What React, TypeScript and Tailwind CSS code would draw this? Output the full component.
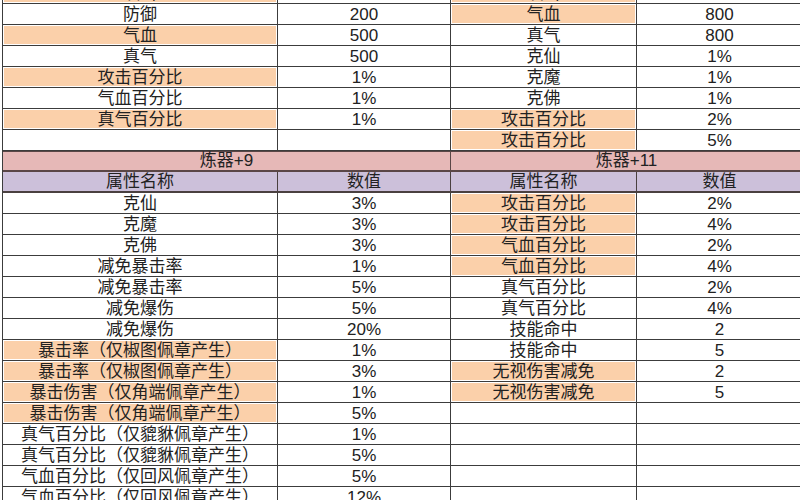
import React from 'react';

type Cell = { n: string; v: string; hl?: boolean };
type Sec = Cell | { head: string } | 'cols' | null;

const left: Sec[] = [
  { n: '攻击', v: '120', hl: true },
  { n: '防御', v: '200' },
  { n: '气血', v: '500', hl: true },
  { n: '真气', v: '500' },
  { n: '攻击百分比', v: '1%', hl: true },
  { n: '气血百分比', v: '1%' },
  { n: '真气百分比', v: '1%', hl: true },
  { n: '', v: '' },
  { head: '炼器+9' },
  'cols',
  { n: '克仙', v: '3%' },
  { n: '克魔', v: '3%' },
  { n: '克佛', v: '3%' },
  { n: '减免暴击率', v: '1%' },
  { n: '减免暴击率', v: '5%' },
  { n: '减免爆伤', v: '5%' },
  { n: '减免爆伤', v: '20%' },
  { n: '暴击率（仅椒图佩章产生）', v: '1%', hl: true },
  { n: '暴击率（仅椒图佩章产生）', v: '3%', hl: true },
  { n: '暴击伤害（仅角端佩章产生）', v: '1%', hl: true },
  { n: '暴击伤害（仅角端佩章产生）', v: '5%', hl: true },
  { n: '真气百分比（仅貔貅佩章产生）', v: '1%' },
  { n: '真气百分比（仅貔貅佩章产生）', v: '5%' },
  { n: '气血百分比（仅回风佩章产生）', v: '5%' },
  { n: '气血百分比（仅回风佩章产生）', v: '12%' },
];

const right: Sec[] = [
  { n: '攻击', v: '240', hl: true },
  { n: '气血', v: '800', hl: true },
  { n: '真气', v: '800' },
  { n: '克仙', v: '1%' },
  { n: '克魔', v: '1%' },
  { n: '克佛', v: '1%' },
  { n: '攻击百分比', v: '2%', hl: true },
  { n: '攻击百分比', v: '5%', hl: true },
  { head: '炼器+11' },
  'cols',
  { n: '攻击百分比', v: '2%', hl: true },
  { n: '攻击百分比', v: '4%', hl: true },
  { n: '气血百分比', v: '2%', hl: true },
  { n: '气血百分比', v: '4%', hl: true },
  { n: '真气百分比', v: '2%' },
  { n: '真气百分比', v: '4%' },
  { n: '技能命中', v: '2' },
  { n: '技能命中', v: '5' },
  { n: '无视伤害减免', v: '2', hl: true },
  { n: '无视伤害减免', v: '5', hl: true },
  null,
  null,
  null,
  null,
  null,
];

// column widths for each half of the sheet
const LEFT = { w1: 'w-[275px]', w2: 'w-[173px]', all: 'w-[448px]' };
const RIGHT = { w1: 'w-[186px]', w2: 'w-[166px]', all: 'w-[352px]' };

function Section({ sec, cols }: { sec: Sec; cols: typeof LEFT }) {
  if (sec && typeof sec === 'object' && 'head' in sec) {
    return (
      <div className={`${cols.all} flex h-full items-center justify-center border-r border-b-2 border-[#5a4646] bg-[#e6b8b7] shadow-[inset_0_1px_0_#5a4646]`}>
        {sec.head}
      </div>
    );
  }
  if (sec === 'cols') {
    return (
      <>
        <div className={`${cols.w1} flex h-full items-center justify-center border-r border-b-2 border-[#4a4040] bg-[#ccc0da]`}>属性名称</div>
        <div className={`${cols.w2} flex h-full items-center justify-center border-r border-b-2 border-[#4a4040] bg-[#ccc0da]`}>数值</div>
      </>
    );
  }
  const c = sec as Cell | null;
  return (
    <>
      <div className={`${cols.w1} h-full border-r border-b border-[#3c3c3c] p-px`}>
        <div className={`flex h-full items-center justify-center ${c?.hl ? 'bg-[#fbd0aa]' : ''}`}>{c?.n}</div>
      </div>
      <div className={`${cols.w2} flex h-full items-center justify-center border-r border-b border-[#3c3c3c]`}>
        {c?.v}
      </div>
    </>
  );
}

export default function App() {
  return (
    <div className="h-[500px] w-[800px] overflow-hidden bg-white pl-[2px] text-[17px] leading-none text-[#222] [font-family:'Liberation_Sans','Noto_Sans_CJK_SC',sans-serif]">
      {/* top row of the sheet is scrolled partly out of view */}
      <div className="mt-[-17px] w-[802px] border-l border-[#3c3c3c]">
        {left.map((l, i) => (
          <div key={i} className="flex h-[21px]">
            <Section sec={l} cols={LEFT} />
            <Section sec={right[i]} cols={RIGHT} />
          </div>
        ))}
      </div>
    </div>
  );
}
